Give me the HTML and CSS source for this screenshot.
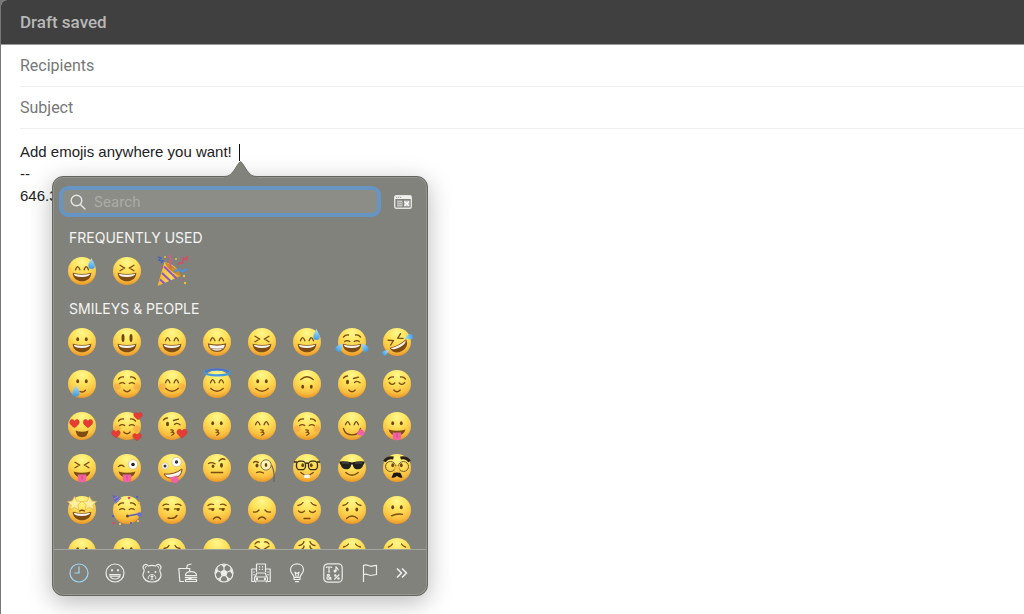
FILE: index.html
```html
<!DOCTYPE html>
<html lang="en">
<head>
  <meta charset="UTF-8" />
  <meta name="viewport" content="width=device-width, initial-scale=1.0" />
  <title>Draft saved</title>
  <link rel="stylesheet" href="styles.css">
</head>
<body>
  <!-- shared gradients for the emoji -->
  <svg class="defs" aria-hidden="true">
    <defs>
      <radialGradient id="skin" cx="0.5" cy="0.18" r="0.86">
        <stop offset="0" stop-color="#fff78c" />
        <stop offset="0.4" stop-color="#fee25a" />
        <stop offset="0.75" stop-color="#f9bf40" />
        <stop offset="1" stop-color="#e68d22" />
      </radialGradient>
      <linearGradient id="drop" x1="0" y1="0" x2="0" y2="1">
        <stop offset="0" stop-color="#b5e4fa" />
        <stop offset="1" stop-color="#3a9be8" />
      </linearGradient>
      <linearGradient id="cone" x1="0" y1="0" x2="1" y2="0">
        <stop offset="0" stop-color="#f2b02c" />
        <stop offset="0.6" stop-color="#fbdc55" />
        <stop offset="1" stop-color="#d98a1c" />
      </linearGradient>
    </defs>
  </svg>

  <form class="compose">
    <header class="compose-header">
      <h1>Draft saved</h1>
    </header>
    <div class="fields">
      <input class="field" type="text" placeholder="Recipients" aria-label="Recipients" autocomplete="off" />
      <input class="field" type="text" placeholder="Subject" aria-label="Subject" autocomplete="off" />
      <textarea class="message" aria-label="Message body" spellcheck="false">Add emojis anywhere you want! 
--
646.3</textarea>
    </div>
  </form>

  <section class="picker" aria-label="Emoji picker">
    <span class="caret"></span>
    <svg class="arrow" viewBox="0 0 34 18" aria-hidden="true">
      <path class="arrow-fill" d="M0 17C6 16.5 8 13 11 9L14.5 3.5Q16.5 0 18.5 3.5L22 9C25 13 27 16.5 33 17V18H0Z" />
      <path class="arrow-edge" d="M0 16.5C6 16.5 8 13 11 9L14.5 3.5Q16.5 0 18.5 3.5L22 9C25 13 27 16.5 33 16.5" />
    </svg>

    <div class="picker-top">
      <label class="search">
        <svg viewBox="0 0 16 16" aria-hidden="true"><circle cx="6.5" cy="6.5" r="5.3" /><path d="M10.4 10.4L15 15" /></svg>
        <input type="search" placeholder="Search" aria-label="Search" autocomplete="off" />
      </label>
      <button class="viewer" type="button" aria-label="Show character viewer">
        <svg viewBox="0 0 18 14" aria-hidden="true">
          <rect x="0.7" y="0.7" width="16.6" height="12.6" rx="1.5" fill="none" stroke="#e4e4e1" stroke-width="1.4" />
          <path d="M1 1h16v3H1z" fill="#f0f0ee" />
          <path d="M2.2 2.3h1M4.2 2.3h1M6.2 2.3h1" stroke="#81827c" />
          <path d="M3 5.500h5.500v6H3zM10 5.500h5.500v6H10z" fill="#c6c6c2" />
          <path d="M3 7.500h5.500M3 9.500h5.500" stroke="#969792" stroke-width="0.7" />
          <path d="M10.500 6.500l4.500 4.400M15 6.500l-4.500 4.400" stroke="#fff" stroke-width="1.200" />
        </svg>
      </button>
    </div>

    <div class="picker-list">
      <h2>FREQUENTLY USED</h2>
      <div class="emoji-grid" id="frequent"></div>
      <h2>SMILEYS &amp; PEOPLE</h2>
      <div class="emoji-grid" id="people"></div>
    </div>

    <nav class="categories" aria-label="Categories">
      <button type="button" class="active" aria-label="Frequently used">
        <svg viewBox="0 0 20 20"><circle cx="10" cy="10" r="9" /><path d="M10 3.500V10H5.500" /></svg>
      </button>
      <button type="button" aria-label="Smileys and people">
        <svg viewBox="0 0 20 20"><circle cx="10" cy="10" r="9" /><path d="M4.800 11.500h10.400c-.4 6-10 6-10.400 0zM6 13.200h8" /><g class="solid"><ellipse cx="7" cy="7.300" rx="1" ry="1.300" /><ellipse cx="13" cy="7.300" rx="1" ry="1.300" /></g></svg>
      </button>
      <button type="button" aria-label="Animals and nature">
        <svg viewBox="0 0 20 20"><path d="M6.300 3C4-.3-.6 2.500 1.800 6.200C2.300 6.800 2.300 7.500 1.800 9C.8 11 .7 12 1.200 13.500C2.300 17 6 19 10 19S17.700 17 18.800 13.500C19.300 12 19.200 11 18.200 9C17.700 7.500 17.700 6.800 18.200 6.200C20.600 2.500 16-.3 13.700 3Q10 1.600 6.300 3z" /><path d="M3.500 5.300C2.800 3.500 4.200 3 5 3.800M16.500 5.300C17.200 3.500 15.800 3 15 3.800M6.300 16C5.800 13.500 7.500 11.500 10 11.500S14.200 13.500 13.700 16M10 14v2M8.500 16.700q1.500 0 1.500-.9 0 .9 1.500.9" stroke-width="0.9" /><g class="solid"><circle cx="6.500" cy="9" r="1" /><circle cx="13.500" cy="9" r="1" /><ellipse cx="10" cy="13.500" rx="1.600" ry="1.100" /></g></svg>
      </button>
      <button type="button" aria-label="Food and drink">
        <svg viewBox="0 0 20 20"><path d="M6 18.500H1.800L.8 5.500h11l-.2 2.500M8.500 5.500L9.500 2l4-1M7.500 12.500C7.500 7.300 18.500 7.300 18.500 12.500zM6.800 14.300h12.400M7.500 16.300h11v2.200h-11zM7.500 12.500h11" /><path d="M10 14.500l2 1.500 2-1.500" /></svg>
      </button>
      <button type="button" aria-label="Activity">
        <svg viewBox="0 0 20 20"><circle cx="10" cy="10" r="9" /><path d="M10 6.500V3M13.500 9l3.500-1.500M12 13l2.500 3M8 13l-2.500 3M6.500 9L3 7.500" /><path class="solid" d="M10 6.300L13.700 9l-1.400 4.300H7.700L6.300 9zM6.500 1.500h7L10 4.300zM18.800 8v4L16 8.500l.5-4zM16.500 15.500l-4 3 1-4zM3.500 15.500l4 3-1-4zM1.200 8v4L4 8.500l-.5-4z" /></svg>
      </button>
      <button type="button" aria-label="Travel and places">
        <svg viewBox="0 0 20 20"><path d="M3.300 18.500H.8V6h4.700M5.500 9V1h9v8M14.500 6h4.700v12.500h-2.500M4.300 14l1.400-4h8.600l1.400 4M3.500 14h13v4h-13zM4.500 18v1.500M15.500 18v1.500" /><path stroke-dasharray="1.300 1.300" d="M8.500 3.200v4M11.500 3.200v4M3 8.500v4M17 8.500v4" /><g class="solid"><circle cx="6" cy="16" r="1.200" /><circle cx="14" cy="16" r="1.200" /></g></svg>
      </button>
      <button type="button" aria-label="Objects">
        <svg viewBox="0 0 20 20"><path d="M7 14.500C7 11.500 3.500 10.500 3.500 6.700C3.500-1 16.500-1 16.500 6.700C16.500 10.500 13 11.500 13 14.500zM7 14.500v2h6v-2M8 18.700h4M9.200 14L8 9.200l2 1.300 2-1.300-1.200 4.800" /></svg>
      </button>
      <button type="button" aria-label="Symbols">
        <svg viewBox="0 0 20 20"><rect x="0.800" y="0.800" width="18.400" height="18.400" rx="4" /><path d="M3.500 5V4h5v1M6 4v5M4.800 9h2.400M13 8V3.500c.3 2 3 1.500 2 4M8.500 16.500L4.300 12.500c-.5-1.500 2.700-1.500 2.200 0L4 14.300c-.7 2.700 3 2.700 4-.3M16.300 11.500l-5 5" /><g class="solid"><circle cx="12" cy="8" r="1.500" /><circle cx="12.300" cy="12.500" r="1.200" /><circle cx="15.500" cy="15.500" r="1.200" /></g></svg>
      </button>
      <button type="button" aria-label="Flags">
        <svg viewBox="0 0 20 20"><path d="M3.500 19V2.500c3-2 5 .8 7.500.8 2 0 3-1 5.500-1v9.200c-2.500 0-3.500 1-5.500 1-2.500 0-4.500-2.500-7.500-.8" /></svg>
      </button>
      <button type="button" class="more" aria-label="More categories">
        <svg viewBox="0 0 12 20"><path d="M1 5.500L5.500 10 1 14.500M6 5.500l4.500 4.500L6 14.500" stroke-width="1.700" /></svg>
      </button>
    </nav>
  </section>

  <script src="emoji.js"></script>
</body>
</html>
```
FILE: styles.css
```css
*, *:before, *:after {
  box-sizing: border-box;
  margin: 0;
  padding: 0;
}

body {
  min-height: 100vh;
  padding-left: 1px;
  overflow: hidden;
  background: #777;
  font-family: "Liberation Sans", Arial, sans-serif;
}

button, input, textarea {
  border: 0;
  outline: none;
  background: none;
  font: inherit;
}

.defs {
  position: absolute;
  width: 0;
  height: 0;
}

/* Compose window */
.compose {
  display: flex;
  flex-direction: column;
  min-height: 100vh;
  background: #fff;
  border-top-left-radius: 6px;
  overflow: hidden;
}

.compose-header {
  display: flex;
  align-items: center;
  height: 45px;
  padding: 0 19px;
  background: #404040;
  border-bottom: 1px solid #9a9a9a;
}

.compose-header h1 {
  color: #b8b8b8;
  font: 500 17px/20px Roboto, sans-serif;
}

.fields {
  display: flex;
  flex: 1;
  flex-direction: column;
  padding-left: 19px;
}

.field {
  height: 42px;
  border-bottom: 1px solid #efefef;
  color: #222;
  font: 400 16px/20px Roboto, sans-serif;
}

.field::placeholder {
  color: #777;
  opacity: 1;
}

.message {
  flex: 1;
  padding-top: 12px;
  color: #222;
  font-size: 15px;
  line-height: 22px;
  resize: none;
}

/* Emoji popover */
.picker {
  position: absolute;
  top: 176px;
  left: 52px;
  display: flex;
  flex-direction: column;
  width: 376px;
  background: #81827c;
  border: 1px solid #656662;
  border-radius: 11px;
  box-shadow: inset 0 0 0 1px #94958f, 0 6px 24px rgba(0, 0, 0, 0.28);
  color: #f4f4f2;
  font-family: Inter, sans-serif;
}

.caret {
  position: absolute;
  top: -33px;
  left: 186px;
  width: 1px;
  height: 17px;
  background: #111;
}

.arrow {
  position: absolute;
  top: -17px;
  left: 171px;
  width: 34px;
  height: 18px;
}

.arrow-fill {
  fill: #81827c;
}

.arrow-edge {
  fill: none;
  stroke: #6f706c;
}

.picker-top {
  display: flex;
  align-items: center;
  gap: 12px;
  padding: 9px 14px 0 6px;
}

.search {
  display: flex;
  flex: 1;
  align-items: center;
  gap: 8px;
  height: 31px;
  padding: 0 7px;
  background: #8c8d87;
  border: 4px solid #6795c3;
  border-radius: 9px;
}

.search svg {
  width: 16px;
  height: 16px;
  fill: none;
  stroke: #e6e6e4;
  stroke-width: 1.4;
  stroke-linecap: round;
}

.search input {
  flex: 1;
  min-width: 0;
  color: #fff;
  font-size: 14px;
}

.search input::placeholder {
  color: #acada8;
  opacity: 1;
}

.viewer {
  width: 20px;
  height: 20px;
}

.viewer svg {
  display: block;
  width: 18px;
  height: 14px;
  margin: 0 auto;
}

.picker-list {
  height: 332px;
  padding: 9px 8px 0 7px;
  overflow: hidden;
}

.picker-list h2 {
  padding-left: 9px;
  font-size: 14px;
  font-weight: 400;
  line-height: 24px;
}

.emoji-grid {
  display: grid;
  grid-template-columns: repeat(8, 1fr);
  grid-auto-rows: 42px;
}

#frequent {
  margin-bottom: 5px;
}

.emoji {
  display: flex;
  align-items: center;
  justify-content: center;
}

.emoji svg {
  width: 32px;
  height: 32px;
  overflow: visible;
}

.ink {
  fill: #6e430f;
}

.line {
  fill: none;
  stroke: #7a4a12;
  stroke-width: 1.3;
  stroke-linecap: round;
}

.mouth {
  fill: #7d4c14;
}

.teeth {
  fill: #f6f5f0;
}

.tongue {
  fill: #f062a4;
}

.heart {
  fill: #e63c35;
  stroke: #c42a26;
  stroke-width: 0.4;
}

.water {
  fill: url(#drop);
}

.blush {
  fill: #f0823a;
  opacity: 0.3;
}

/* Category bar */
.categories {
  display: flex;
  align-items: center;
  justify-content: space-between;
  height: 46px;
  padding: 0 18px 0 15px;
  margin: 0 1px;
  border-top: 1px solid #a3a49f;
}

.categories button {
  width: 20px;
  height: 20px;
}

.categories .more {
  width: 12px;
}

.categories svg {
  display: block;
  width: 100%;
  height: 20px;
  fill: none;
  stroke: #ecece9;
  stroke-width: 1.2;
  stroke-linejoin: round;
}

.categories .solid {
  fill: #ecece9;
  stroke: none;
}

.categories .active svg {
  stroke: #9fd8f2;
}
```
FILE: emoji.js
```js
// Pieces of a face, drawn on a 32x32 box with the head centred at 16,16
const heart = (x, y, s = 1) =>
  `<path class="heart" transform="translate(${x} ${y}) scale(${s})" d="M0 4.500C-5 1-5.500-1-4.800-2.700C-3.800-4.800-1-4.600 0-2.300C1-4.600 3.800-4.800 4.800-2.700C5.500-1 5 1 0 4.500Z"/>`;
const tear = (x, y, turn = 0, s = 1) =>
  `<path class="water" transform="translate(${x} ${y}) rotate(${turn}) scale(${s})" d="M0-6C1-3 3.300-1 3.300 1.800A3.300 3.300 0 0 1-3.300 1.800C-3.300-1-1-3 0-6Z"/>`;
const line = d => `<path class="line" d="${d}"/>`;
const star = (x, y) =>
  `<path transform="translate(${x} ${y}) scale(1.200)" fill="#fff0a0" stroke="#e0a83a" stroke-width=".5" d="M0-6L1.700-2 6-1.700 2.700 1.200 3.800 5.500 0 3.100-3.800 5.500-2.700 1.200-6-1.700-1.700-2Z"/>`;

const parts = {
  dots: '<g class="ink"><ellipse cx="11.700" cy="13.300" rx="1.400" ry="2"/><ellipse cx="20.300" cy="13.300" rx="1.400" ry="2"/></g>',
  lowDots: '<g class="ink"><ellipse cx="11.200" cy="15.500" rx="1.400" ry="2"/><ellipse cx="20.800" cy="15.500" rx="1.400" ry="2"/></g>',
  tall: '<g class="ink"><ellipse cx="12" cy="12" rx="1.500" ry="3.900"/><ellipse cx="20" cy="12" rx="1.500" ry="3.900"/></g>',
  arches: line("M9.500 14.800Q11.700 8.500 13.900 14.800M18.100 14.800Q20.300 8.500 22.500 14.800"),
  squint: line("M9 10.300l4.500 2.700L9 15.700M23 10.300L18.500 13l4.500 2.700"),
  shutUp: line("M8.700 15.500q2.500-1.800 5 0M18.300 15.500q2.500-1.800 5 0"),
  shutDown: line("M8.300 14.500q2.500 3.500 5.500.5M23.700 14.500q-2.500 3.500-5.500.5"),
  browsUp: line("M7.500 11q2-2.500 5-2M24.500 11q-2-2.500-5-2"),
  browsSad: line("M7 11.500q3.500-.5 5-3M25 11.500q-3.500-.5-5-3"),
  wink: line("M18.500 14.500q2.500-2.500 5.500.3M17.500 10.500l5-1.300M7.500 10q1.500-2 4-2") + '<ellipse class="ink" cx="11.500" cy="14" rx="1.500" ry="2.300"/>',
  grin: '<path class="mouth" d="M6.700 17.800Q16 20.200 25.300 17.800C25.300 29.200 6.700 29.200 6.700 17.800Z"/><path class="teeth" d="M7.600 18.700Q16 20.700 24.400 18.700Q23.500 21.800 16 21.900T7.600 18.700Z"/>',
  beam: '<path class="teeth" stroke="#7d4c14" stroke-width="1.200" d="M7.500 18Q16 20.200 24.500 18C24.500 27.800 7.500 27.800 7.500 18Z"/><path d="M8.500 22.300Q16 23.800 23.500 22.300" fill="none" stroke="#9f8560" stroke-width=".8"/>',
  tinySmile: line("M12.800 22q3.200 3.500 6.400 0"),
  smile: line("M9.800 20.500q6.200 5.500 12.400 0"),
  bigSmile: line("M7.500 18.500C9.500 27 22.500 27 24.500 18.500"),
  kiss: line("M14.800 19.800q4.500.2 1 2.400q4.500.5 0 3"),
  frown: line("M12.300 25q3.700-4 7.400 0"),
  bigFrown: line("M10.500 24.500q5.500-5 11 0"),
  flat: line("M10.300 20.500h11.400"),
  tongue: '<path class="mouth" d="M7.500 19.500Q16 22 24.500 19.500Q23 25.500 16 25.500T7.500 19.500Z"/><path class="tongue" d="M11.800 22.600h8.400v4.500q0 3.300-4.200 3.300t-4.200-3.300Z"/><path d="M16 23.500v4" stroke="#c93c7e" stroke-width=".7"/>',
  unamused: line("M8 14.800h5M18.500 14.800h5M7 11.500q2.500-2 5.500-1M25 11.500q-2.500-2-5.500-1") + '<g class="ink"><circle cx="11.700" cy="15.700" r="1.400"/><circle cx="22" cy="15.700" r="1.400"/></g>',
  blush: '<g class="blush"><circle cx="6.500" cy="18.500" r="3.300"/><circle cx="25.500" cy="18.500" r="3.300"/></g>'
};

const p = parts;
const head = '<circle cx="16" cy="16" r="14" fill="url(#skin)"/>';
const sweat = p.arches + p.grin + tear(25.5, 9, 0, 1);

const popper =
  '<path fill="url(#cone)" d="M1.500 31L8.500 7Q20 9 25 21Z"/>' +
  '<path d="M8 11.500l12.500 12M6 18l8.500 8M4 24.500l4.500 4" stroke="#8d55c8" stroke-width="2"/>' +
  '<path d="M8.500 7Q12 17 25 21Q20 10.500 8.500 7Z" fill="#c98c2c"/>' +
  '<path d="M13 13C18 13 11 7 15 6C17 4 12 3 14 0" fill="none" stroke="#e2578f" stroke-width="1.500"/>' +
  '<path d="M22 10q1-3 3-2t2-3 2-1 2-3" fill="none" stroke="#dc4968" stroke-width="1.500"/>' +
  '<path d="M18 17q4-3 7-1.500t6-1.500" fill="none" stroke="#4f91db" stroke-width="2"/>' +
  '<path d="M2 2l3 1-2 2 4 1-2 2" fill="none" stroke="#4961bd" stroke-width="1.400"/>' +
  '<g fill="#f2ba3d"><circle cx="9" cy="2" r="1"/><circle cx="20" cy="4" r="1"/><circle cx="28" cy="21" r="1.200"/><circle cx="29" cy="28" r="1.200"/></g>' +
  '<g fill="#de4d83"><circle cx="27" cy="25" r="1"/><circle cx="6" cy="12" r=".9"/></g>';

const frequent = [
  ["grinning face with sweat", head + sweat],
  ["squinting face", head + p.squint + p.grin],
  ["party popper", popper]
];

const people = [
  ["grinning face", head + p.dots + p.grin],
  ["big eyes", head + p.tall + p.grin],
  ["smiling eyes", head + p.arches + p.grin],
  ["beaming face", head + p.arches + p.beam],
  ["squinting face", head + p.squint + p.grin],
  ["grinning face with sweat", head + sweat],
  ["tears of joy", head + p.shutUp + p.browsUp + p.grin + tear(3.5, 21.5, 35, .9) + tear(28.5, 21.5, -35, .9)],
  ["rolling on the floor laughing", head + `<g transform="rotate(-28 16 16)">${p.squint}${p.grin}</g>` + tear(4.5, 26.5, 55, .7) + tear(28, 11, -105, .8)],

  ["smiling face with tear", head + p.dots + line("M14 23.500q3 1.500 5.500-1.200") + tear(10, 23, 0, 1.05)],
  ["smiling face", head + p.blush + p.browsUp + p.shutUp + p.tinySmile],
  ["blushing face", head + p.blush + p.arches + p.smile],
  ["halo", head + p.arches + p.smile + '<ellipse cx="16" cy="4.500" rx="12.500" ry="2.900" fill="none" stroke="#439ae2" stroke-width="2.200"/><path d="M4 3.500Q16-1 28 3.500" fill="none" stroke="#5268cb" stroke-width="1.300"/>'],
  ["slightly smiling face", head + p.dots + p.smile],
  ["upside-down face", head + `<g transform="rotate(180 16 16)">${p.dots}${p.smile}</g>`],
  ["winking face", head + p.wink + p.tinySmile],
  ["relieved face", head + p.browsUp + p.shutDown + p.tinySmile],

  ["heart eyes", head + heart(8.5, 13.5, .95) + heart(22, 13.5, .95) + '<path class="mouth" d="M9.500 20.500Q16 23 22.500 20.500Q21.500 27.300 16 27.300T9.500 20.500Z"/>'],
  ["smiling face with hearts", head + p.blush + p.browsUp + p.shutUp + p.tinySmile + heart(27, 6, .85) + heart(5, 24, .85) + heart(26, 27, .85)],
  ["blowing a kiss", head + p.wink + p.kiss + heart(26, 23.5)],
  ["kissing face", head + p.dots + p.kiss],
  ["kissing, smiling eyes", head + p.arches + p.kiss],
  ["kissing, closed eyes", head + p.blush + p.browsUp + p.shutUp + p.kiss],
  ["savoring food", head + p.arches + p.bigSmile + '<path class="tongue" d="M20.500 23.500l4-4.500q5 1.500 3.500 5.500-3 3-7.500-1Z"/>'],
  ["tongue out", head + p.dots + p.tongue],

  ["squinting, tongue out", head + p.squint + p.tongue],
  ["winking, tongue out", head + line("M7.500 14.500q2.500-2.500 5.500 0") + '<circle cx="22" cy="12.500" r="4.700" fill="#fff" stroke="#b9a584" stroke-width=".5"/><circle cx="22" cy="12.500" r="1.800" fill="#222"/>' + p.tongue],
  ["zany face", head + '<g fill="#fff" stroke="#b9a584" stroke-width=".5"><circle cx="9" cy="14" r="3.200"/><circle cx="20.500" cy="10" r="4.700"/></g><g fill="#333"><circle cx="9" cy="14" r="1.500"/><circle cx="20.500" cy="10" r="1.700"/></g><path class="teeth" stroke="#7d4c14" stroke-width="1" d="M8 22Q18 23 26 17Q26 25 17 26Q10 26.500 8 22Z"/><path class="tongue" d="M14 25.500l7-2 1.500 4q.5 3.500-3.500 3.500-3 0-4-2.500Z"/>'],
  ["raised eyebrow", head + '<g class="ink"><ellipse cx="12" cy="14.300" rx="1.300" ry="1.700"/><ellipse cx="20.500" cy="13.300" rx="1.500" ry="2.400"/></g>' + line("M7.500 11.500q3-2 6.500.3M18 9q3-3.500 6-1.500") + p.flat],
  ["monocle", head + line("M7.500 10.500q2-2 5 0M10.500 20.500q3-1.500 7 .5") + '<ellipse class="ink" cx="11" cy="13.500" rx="1.500" ry="2"/><circle cx="20" cy="13" r="5.200" fill="#fff" fill-opacity=".5" stroke="#86745a"/><ellipse class="ink" cx="20" cy="13" rx="1.300" ry="2"/><path d="M25.500 13q3.500 7 2.500 17" fill="none" stroke="#6c6252" stroke-width="1.100"/>'],
  ["nerd face", head + p.dots + p.smile + '<path class="teeth" d="M13.300 22.500h5.400v3.500h-5.400z"/><g fill="none" stroke="#332717" stroke-width="1.300"><rect x="5.500" y="9.200" width="9" height="8.500" rx="3.500"/><rect x="17.500" y="9.200" width="9" height="8.500" rx="3.500"/><path d="M3 10h3M14.500 11.500q1.500-1 3 0M26 10h3"/></g>'],
  ["sunglasses", head + p.smile + '<path d="M3.500 9.500Q9 8.500 16 10.500Q23 8.500 28.500 9.500V11L27 13.500Q25.500 18 20.500 17.200Q17.500 17 16.700 12.500h-1.400Q14.500 17 11.500 17.200Q6.500 18 5 13.500L3.500 11Z" fill="#20201f"/><path d="M6 11h7M19 11h7" stroke="#777" stroke-width=".6"/>'],
  ["disguised face", head + p.dots + '<g fill="none" stroke="#6d5c3c"><circle cx="9.500" cy="14.500" r="5"/><circle cx="22.500" cy="14.500" r="5"/></g><path d="M13 19q.5-6 3-6t3 6q0 3-3 3t-3-3Z" fill="#f9ca4b" stroke="#d28a28" stroke-width=".5"/><path d="M12.500 21q3.500-1 7 0l2 4.500q-3 .8-5.500-1.500-2.500 2.300-5.500 1.500Z" fill="#1c1712"/><path d="M3.500 9.500q3-5 9-3.500M19.500 6q6-1.500 9 3.500" fill="none" stroke="#282019" stroke-width="3"/>'],

  ["star-struck", head + line("M13.500 17q2.500-1.500 5 0") + p.grin + star(8.5, 9.5) + star(23.5, 9.5)],
  ["partying face", head + p.browsUp + p.shutUp + '<circle class="ink" cx="16.500" cy="22" r="1.500"/><path d="M17 22l10-2" stroke="#5962bb" stroke-width="1.500"/><circle cx="28.500" cy="20.500" r="2.200" fill="#6070d0"/><path d="M1.500 1l9 3-6 6Z" fill="#7959bd"/><path d="M3 5l4-2.500M4 9l5-5" stroke="#58b1d5"/><g fill="#dc4a66"><circle cx="18" cy="4" r="1.300"/><circle cx="2.500" cy="29" r="1.300"/></g><g fill="#405dc0"><circle cx="26" cy="3" r="1"/><circle cx="2" cy="22" r="1"/><circle cx="20" cy="29" r="1"/></g><g fill="#f0bc48"><circle cx="28" cy="9" r="1.200"/><circle cx="9" cy="30" r="1.200"/><circle cx="27" cy="27" r="1.200"/></g>'],
  ["smirking face", head + p.unamused + line("M12 24q6 1.500 9-2.500")],
  ["unamused face", head + p.unamused + p.frown],
  ["disappointed face", head + line("M7.500 18q3.500.8 5.500-2M24.500 18q-3.500.8-5.500-2") + p.frown],
  ["pensive face", head + p.browsSad + line("M7.500 17q3 3 6 0M24.500 17q-3 3-6 0M13 24.500h6")],
  ["worried face", head + p.browsSad + p.lowDots + p.bigFrown],
  ["confused face", head + p.dots + line("M10.500 21.800q5-2.500 11-1.500")],

  ["slightly frowning face", head + p.dots + p.bigFrown],
  ["frowning face", head + p.dots + p.bigFrown],
  ["persevering face", head + line("M8 12.500q4-.5 5-3M24 12.500q-4-.5-5-3") + p.bigFrown],
  ["sleepy face", head + line("M8 17q2.500 2 5 0M19 17q2.500 2 5 0") + p.bigFrown],
  ["confounded face", head + p.squint + line("M9 8q2-3 4.500-2M23 8q-2-3-4.500-2") + p.bigFrown],
  ["tired face", head + line("M8 9.500q4-.5 5-4M24 9.500q-4-.5-5-4M9 14q4-1 4-4M23 14q-4-1-4-4") + p.bigFrown],
  ["crying face", head + line("M7.500 11q3.500-.5 5-3M24.500 11q-3.500-.5-5-3") + '<g class="water"><circle cx="11.500" cy="15" r="2"/><circle cx="20.500" cy="15" r="2"/></g>' + p.bigFrown],
  ["weary face", head + line("M7.500 11q2.500-.5 4-3M24.500 11q-2.500-.5-4-3") + p.bigFrown]
];

function fill(id, list) {
  document.getElementById(id).innerHTML = list.map(([name, art]) =>
    `<button type="button" class="emoji" aria-label="${name}"><svg viewBox="0 0 32 32">${art}</svg></button>`
  ).join("");
}

fill("frequent", frequent);
fill("people", people);
```
